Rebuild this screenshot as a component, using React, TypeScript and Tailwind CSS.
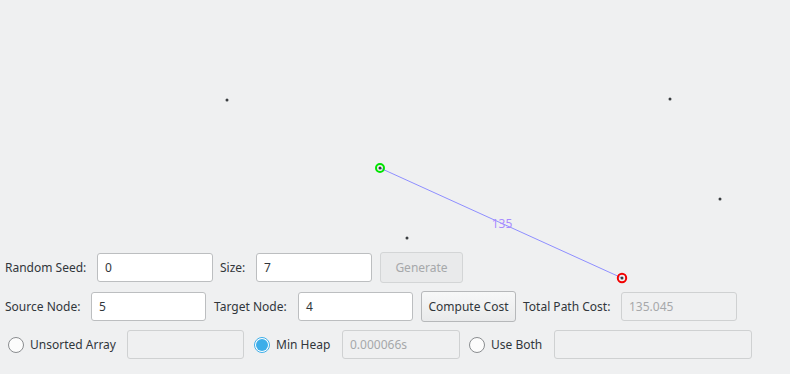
import React from "react";

const font = { fontFamily: '"Noto Sans", "Open Sans", sans-serif' };

const nodes = [
  { x: 227, y: 100 },
  { x: 670, y: 99 },
  { x: 720, y: 199 },
  { x: 407, y: 238 },
  { x: 380, y: 168 },
  { x: 622, y: 278 },
];

function Field({ value, disabled = false, className = "" }: { value: string; disabled?: boolean; className?: string }) {
  return (
    <div
      className={`shrink-0 h-[29px] rounded-[3px] border flex items-center px-[7px] ${
        disabled ? "bg-[#eff0f1] border-[#cfd1d2] text-[#a6a8aa]" : "bg-white border-[#bcbec0] text-[#31363b]"
      } ${className}`}
    >
      {value}
    </div>
  );
}

function Radio({ checked = false, className = "" }: { checked?: boolean; className?: string }) {
  return checked ? (
    <span className={`block shrink-0 w-[16px] h-[16px] rounded-full border border-[#3daee9] bg-white p-[1px] ${className}`}>
      <span className="block w-full h-full rounded-full bg-[#3daee9]" />
    </span>
  ) : (
    <span className={`block shrink-0 w-[16px] h-[16px] rounded-full border border-[#8a8d90] bg-[#fcfcfc] ${className}`} />
  );
}

function Label({ text, className = "" }: { text: string; className?: string }) {
  return <span className={`shrink-0 whitespace-nowrap ${className}`}>{text}</span>;
}

function Graph() {
  return (
    <svg className="absolute inset-0" width={790} height={374}>
      <line x1={380} y1={168} x2={622} y2={278} stroke="#8e8eff" strokeWidth={1} />
      <text x={502} y={228} fontSize={12} fill="#a98bff" textAnchor="middle" style={font}>
        135
      </text>
      <circle cx={380} cy={168} r={4} fill="none" stroke="#00e400" strokeWidth={2} />
      <circle cx={622} cy={278} r={4.2} fill="none" stroke="#f20000" strokeWidth={2} />
      {nodes.map((n, i) => (
        <circle key={i} cx={n.x} cy={n.y} r={1.5} fill="#3a3d40" />
      ))}
    </svg>
  );
}

export default function App() {
  return (
    <div className="relative w-[790px] h-[374px] bg-[#eff0f1] overflow-hidden text-[12px] text-[#31363b]" style={font}>
      <Graph />
      <div className="absolute left-0 right-0 top-[252px] flex flex-col">
        <div className="flex items-center h-[31px]">
          <Label text="Random Seed:" className="ml-[5px] w-[81px]" />
          <Field value="0" className="ml-[11px] w-[116px]" />
          <Label text="Size:" className="ml-[7px] w-[25px]" />
          <Field value="7" className="ml-[11px] w-[116px]" />
          <button className="shrink-0 ml-[8px] w-[83px] h-[31px] rounded-[3px] border border-[#d3d5d6] bg-[#e9eaeb] text-[#a6a8aa]">
            Generate
          </button>
        </div>
        <div className="flex items-center h-[31px] mt-[8px]">
          <Label text="Source Node:" className="ml-[5px] w-[75px]" />
          <Field value="5" className="ml-[11px] w-[115px]" />
          <Label text="Target Node:" className="ml-[8px] w-[76px]" />
          <Field value="4" className="ml-[8px] w-[115px]" />
          <button className="shrink-0 ml-[8px] w-[95px] h-[31px] rounded-[3px] border border-[#b6b8ba] bg-gradient-to-b from-[#f7f8f8] to-[#e9eaeb] text-[#31363b]">
            Compute Cost
          </button>
          <Label text="Total Path Cost:" className="ml-[7px] w-[91px]" />
          <Field value="135.045" disabled className="ml-[7px] w-[116px]" />
        </div>
        <div className="flex items-center h-[29px] mt-[8px]">
          <Radio className="ml-[8px]" />
          <Label text="Unsorted Array" className="ml-[6px] w-[91px]" />
          <Field value="" disabled className="ml-[6px] w-[117px]" />
          <Radio checked className="ml-[10px]" />
          <Label text="Min Heap" className="ml-[6px] w-[60px]" />
          <Field value="0.000066s" disabled className="ml-[6px] w-[118px]" />
          <Radio className="ml-[9px]" />
          <Label text="Use Both" className="ml-[6px] w-[57px]" />
          <Field value="" disabled className="ml-[6px] w-[198px]" />
        </div>
      </div>
    </div>
  );
}
